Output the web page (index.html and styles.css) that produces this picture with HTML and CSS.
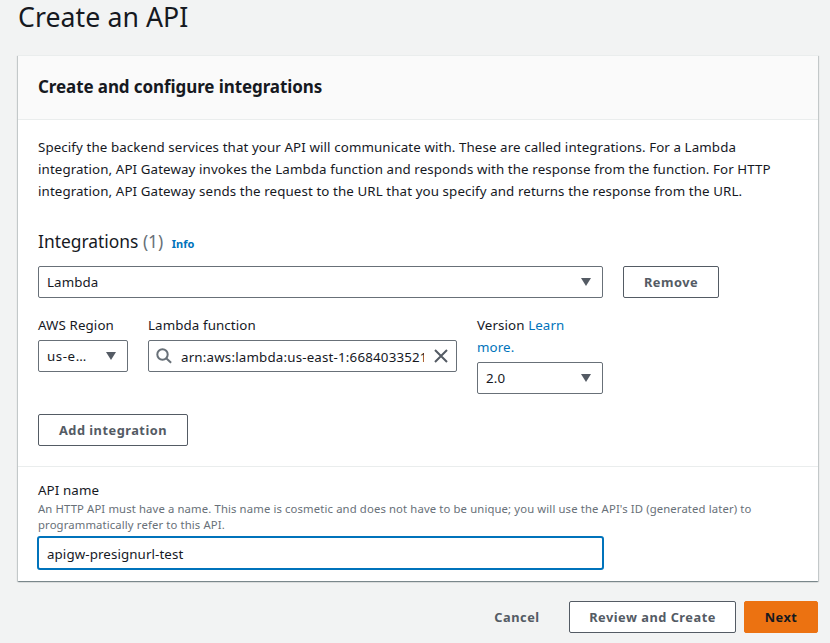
FILE: index.html
```html
<!DOCTYPE html>
<html lang="en">
<head>
<meta charset="utf-8">
<title>Create an API</title>
<link rel="stylesheet" href="styles.css">
</head>
<body>
<main class="page">
  <h1>Create an API</h1>
  <section class="card">
    <header class="card-head"><h2>Create and configure integrations</h2></header>
    <div class="card-body">
      <p class="intro">Specify the backend services that your API will communicate with. These are called integrations. For a Lambda<br>integration, API Gateway invokes the Lambda function and responds with the response from the function. For HTTP<br>integration, API Gateway sends the request to the URL that you specify and returns the response from the URL.</p>
      <h3>Integrations <span class="count">(1)</span> <a class="info">Info</a></h3>
      <div class="row">
        <div class="field type"><span>Lambda</span><svg class="caret" viewBox="0 0 12 10"><path d="M1 1h10L6 9z"/></svg></div>
        <button class="btn remove">Remove</button>
      </div>
      <div class="row details">
        <div class="region"><label>AWS Region</label><div class="field"><span class="short">us-e…</span><svg class="caret" viewBox="0 0 12 10"><path d="M1 1h10L6 9z"/></svg></div></div>
        <div class="function"><label>Lambda function</label><div class="field search"><svg class="glass" viewBox="0 0 16 16"><circle cx="6.5" cy="6.5" r="5.2"/><path d="M10.2 10.2l4.9 4.6"/></svg><span class="arn">arn:aws:lambda:us-east-1:6684033521</span><svg class="close" viewBox="0 0 14 14"><path d="M1 1l12 12M13 1L1 13"/></svg></div></div>
        <div class="version"><label>Version <a>Learn<br>more.</a></label><div class="field"><span>2.0</span><svg class="caret" viewBox="0 0 12 10"><path d="M1 1h10L6 9z"/></svg></div></div>
      </div>
      <button class="btn add">Add integration</button>
    </div>
    <div class="name">
      <label>API name</label>
      <p class="hint">An HTTP API must have a name. This name is cosmetic and does not have to be unique; you will use the API's ID (generated later) to<br>programmatically refer to this API.</p>
      <div class="field focus"><span>apigw-presignurl-test</span></div>
    </div>
  </section>
  <footer><button class="btn cancel">Cancel</button><button class="btn review">Review and Create</button><button class="btn next">Next</button></footer>
</main>
</body>
</html>
```
FILE: styles.css
```css
* { box-sizing: border-box; }
body { margin: 0; background: #f2f3f3; color: #16191f; font: 13.33px/22px "Noto Sans", sans-serif; letter-spacing: .1px; overflow: hidden; }
h1, h2, h3, p { margin: 0; font-weight: 400; }
a { color: #0073bb; }
.page { width: 830px; height: 643px; padding: 0 12px 0 18px; }
h1 { height: 55px; font-size: 26.67px; line-height: 34px; letter-spacing: .07px; }
.card { height: 526px; background: #fff; box-shadow: 0 1px 1px rgba(0,28,36,.3), 1px 1px 1px rgba(0,28,36,.15), -1px 1px 1px rgba(0,28,36,.15); border-top: 1px solid #eaeded; }
.card-head { height: 64px; padding: 19px 20px; background: #fafafa; border-bottom: 1px solid #eaeded; }
h2 { font-size: 17px; line-height: 24px; font-weight: 700; letter-spacing: -.09px; }
.card-body { height: 346px; padding: 16px 20px 0; }
.intro { white-space: nowrap; }
h3 { height: 64px; padding-top: 27px; font-size: 17.4px; line-height: 24px; letter-spacing: 0; }
.count { color: #687078; }
.info { font-size: 11px; font-weight: 700; margin-left: 4px; }
.row { display: flex; gap: 20px; }
.field { height: 32px; padding: 0 10px 0 8px; display: flex; align-items: center; justify-content: space-between; border: 1px solid #687078; border-radius: 2px; background: #fff; white-space: nowrap; }
.type { width: 565px; }
.short { letter-spacing: .55px; }
.caret { width: 12px; height: 10px; fill: #545b64; flex: none; }
.btn { height: 32px; padding: 0; border: 1px solid #545b64; border-radius: 2px; background: #fff; color: #545b64; font: 700 12.8px/20px "Noto Sans", sans-serif; letter-spacing: .5px; }
.remove { width: 96px; }
.details { margin-top: 16px; height: 80px; align-items: flex-start; }
label { display: block; }
.details .field { margin-top: 4px; }
.region { width: 90px; }
.function { width: 309px; }
.version { width: 126px; }
.search { justify-content: flex-start; padding: 0 8px 0 7px; }
.glass, .close { fill: none; flex: none; }
.glass { width: 16px; height: 16px; margin-right: 9px; stroke: #687078; stroke-width: 2; }
.arn { width: 243px; overflow: hidden; letter-spacing: .18px; padding-top: 1px; }
.close { width: 14px; height: 14px; margin-left: 10px; stroke: #545b64; stroke-width: 2; }
.add { width: 150px; margin-top: 20px; }
.name { height: 115px; padding: 12px 20px; border-top: 1px solid #eaeded; }
.hint { font-size: 11.3px; line-height: 16px; letter-spacing: .125px; color: #687078; white-space: nowrap; }
.focus { width: 567px; height: 34px; margin: 3px 0 0 -1px; border: 2px solid #0073bb; border-radius: 3px; padding-top: 1px; }
footer { padding-top: 20px; display: flex; justify-content: flex-end; }
.cancel { width: 86px; border-color: transparent; background: none; margin-right: 9px; }
.review { width: 167px; margin-right: 8px; }
.next { width: 74px; background: #ec7211; border-color: #ec7211; color: #16191f; }
```
